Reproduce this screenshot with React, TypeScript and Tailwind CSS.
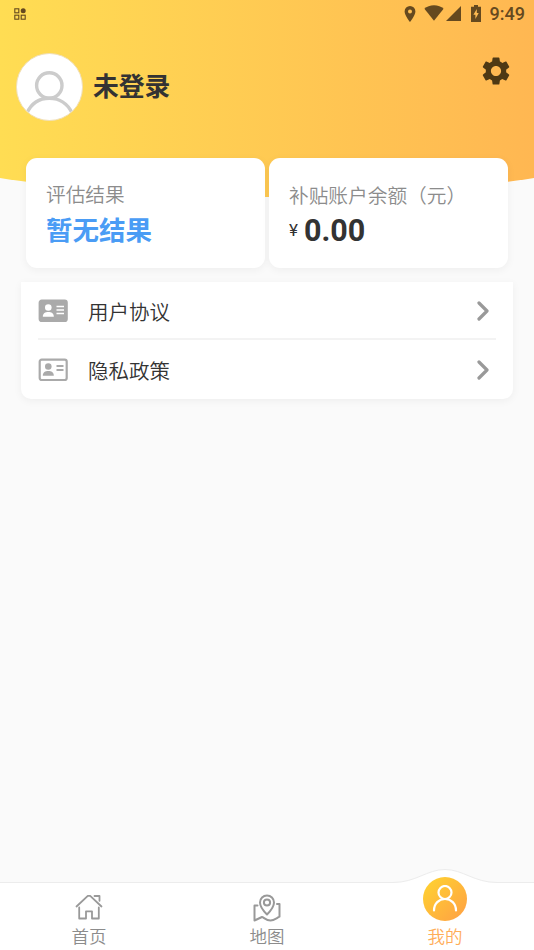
import type { ReactNode } from 'react';

const CJK = "font-['Roboto','Noto_Sans_CJK_SC',sans-serif]";

function StatusBar() {
  return (
    <div className="flex h-[27px] items-center pl-[14px] pr-[9px] text-[#65491f]">
      <svg width="12" height="12" viewBox="0 0 12 12" fill="none" stroke="currentColor" strokeWidth="1.1" aria-hidden="true">
        <rect x="0.8" y="0.8" width="4" height="4" />
        <rect x="0.8" y="7.2" width="4" height="4" />
        <rect x="7.2" y="7.2" width="4" height="4" />
        <circle cx="9.2" cy="2.8" r="2.5" fill="currentColor" stroke="none" />
      </svg>
      <div className="ml-auto flex items-center">
        <svg width="12" height="16" viewBox="0 0 12 16" className="mr-[8px]" fill="currentColor" aria-hidden="true">
          <path fillRule="evenodd" d="M6 0a5.4 5.4 0 0 0-5.4 5.4C.6 9.4 6 16 6 16s5.400-6.600 5.400-10.600A5.400 5.400 0 0 0 6 0zm0 3.400a2 2 0 1 1 0 4 2 2 0 0 1 0-4z" />
        </svg>
        <svg width="20" height="16" viewBox="0 0 20 16" className="-mt-px mr-[2px]" fill="currentColor" aria-hidden="true">
          <path d="M10 .3C6.200.3 2.700 1.600.4 3.800L10 15.800l9.600-12C17.300 1.600 13.800.3 10 .3z" />
        </svg>
        <svg width="15" height="15" viewBox="0 0 15 15" className="mr-[10px]" fill="currentColor" aria-hidden="true">
          <path d="M15 0v15H0z" />
        </svg>
        <svg width="10" height="17" viewBox="0 0 10 17" className="-mt-px mr-[9px]" fill="currentColor" aria-hidden="true">
          <path fillRule="evenodd" d="M3 0h4v1.700h3V17H0V1.700h3zM5.800 4 2.400 9.800h2v4.200l3.300-6H5.800z" />
        </svg>
        <span className="font-['Roboto',sans-serif] text-[18px] font-medium leading-[20px]">9:49</span>
      </div>
    </div>
  );
}

function Avatar() {
  return (
    <div className="h-[68px] w-[67px] shrink-0 overflow-hidden rounded-full border border-[#f0dfb8] bg-white">
      <svg width="65" height="66" viewBox="0 0 65 66" fill="none" stroke="#ccc" strokeWidth="3.400" aria-hidden="true">
        <circle cx="32.300" cy="31.500" r="12.700" />
        <path d="M10 59C14.500 49 23 44.200 32.300 44.200S50.500 49 55 59" />
      </svg>
    </div>
  );
}

function GearIcon() {
  return (
    <svg width="34" height="34" viewBox="0 0 24 24" fill="#4e3914" aria-hidden="true">
      <path d="M19.140 12.940c.04-.3.06-.61.06-.94 0-.32-.02-.64-.07-.94l2.030-1.580c.18-.14.23-.41.12-.61l-1.920-3.320c-.12-.22-.37-.29-.59-.22l-2.390.96c-.5-.38-1.030-.7-1.620-.94l-.36-2.540c-.04-.24-.24-.41-.48-.41h-3.840c-.24 0-.43.17-.47.41l-.36 2.540c-.59.24-1.130.57-1.620.94l-2.390-.96c-.22-.08-.47 0-.59.22L2.740 8.870c-.12.21-.08.47.12.61l2.030 1.580c-.05.3-.09.63-.09.94s.02.64.07.94l-2.030 1.580c-.18.14-.23.41-.12.61l1.920 3.320c.12.22.37.29.59.22l2.390-.96c.5.38 1.030.7 1.620.94l.36 2.540c.05.24.24.41.48.41h3.840c.24 0 .44-.17.47-.41l.36-2.540c.59-.24 1.130-.56 1.620-.94l2.390.96c.22.08.47 0 .59-.22l1.920-3.320c.12-.22.07-.47-.12-.61l-2.010-1.580zM12 15.600c-1.980 0-3.600-1.620-3.600-3.600s1.620-3.600 3.600-3.600 3.600 1.620 3.600 3.600-1.620 3.600-3.600 3.600z" />
    </svg>
  );
}

function IdCardIcon({ filled }: { filled?: boolean }) {
  const ink = filled ? '#fff' : '#aaa';
  return (
    <svg width="30" height="24" viewBox="0 0 30 24" fill="none" aria-hidden="true">
      <rect x="1.700" y="1.700" width="27" height="20.300" rx="2" fill={filled ? '#aaa' : '#fff'} stroke="#aaa" strokeWidth="2.200" />
      <circle cx="10.300" cy="8.500" r="3.300" fill={ink} />
      <path d="M4.800 17.700c0-3.400 2.400-4.800 5.500-4.800s5.500 1.400 5.500 4.800z" fill={ink} />
      {filled ? (
        <path d="M18.500 7.500H26M18.500 11H26M18.500 14.500H26" stroke={ink} strokeWidth="1.500" />
      ) : (
        <path d="M18.500 8h7M18.500 12h7" stroke={ink} strokeWidth="1.900" />
      )}
    </svg>
  );
}

function MenuRow({ icon, label }: { icon: ReactNode; label: string }) {
  return (
    <div className="flex h-[58px] items-center pr-[7px]">
      {icon}
      <span className="ml-[20px] mt-[4px] text-[20.500px] font-[350] leading-[30px] text-[#333]">{label}</span>
      <svg width="12" height="20" viewBox="0 0 12 20" className="ml-auto" fill="none" stroke="#999" strokeWidth="3.200" strokeLinecap="round" strokeLinejoin="round" aria-hidden="true">
        <path d="M2 2l8 8-8 8" />
      </svg>
    </div>
  );
}

function HomeIcon() {
  return (
    <svg width="28" height="26" viewBox="0 0 28 26" fill="none" stroke="#999" strokeWidth="1.800" strokeLinecap="round" strokeLinejoin="round" className="mb-[4px]" aria-hidden="true">
      <path d="M1.500 12.500 12.800 1.800h2.400l11.300 10.700M19.500 2h5v4.800M4.200 13.500v11h6.800v-7.200h6v7.200h6.800v-11" />
    </svg>
  );
}

function MapIcon() {
  return (
    <svg width="28" height="28" viewBox="0 0 28 28" fill="none" stroke="#999" strokeWidth="2" strokeLinejoin="round" strokeLinecap="round" className="mb-[2px]" aria-hidden="true">
      <path d="M14 20.500C10 16.500 7 12.500 7 8.500a7 7 0 0 1 14 0c0 4-3 8-7 12z" />
      <circle cx="14" cy="8.500" r="3.100" />
      <path d="M4.500 11.500H1.500V26.500l7.500-3.500c1.500 0 4 3.500 8.500 3.500 3 0 5.500-2 9-3.800V10h-2.500" />
    </svg>
  );
}

function Tab({ icon, label, active }: { icon: ReactNode; label: string; active?: boolean }) {
  return (
    <div className="flex flex-1 flex-col items-center justify-end">
      {icon}
      <span className={active ? 'text-[17.500px] font-[350] leading-[26px] text-[#ffad58]' : 'text-[17.500px] font-[350] leading-[26px] text-[#8c8c8c]'}>
        {label}
      </span>
    </div>
  );
}

export default function App() {
  return (
    <div className={`relative flex h-[950px] w-[534px] flex-col overflow-hidden bg-[#fafafa] ${CJK}`}>
      {/* curved header backdrop */}
      <div className="absolute inset-x-0 top-0 h-[197px] overflow-hidden">
        <div className="absolute -left-1/2 h-full w-[200%] bg-[linear-gradient(90deg,#ffdd53_25%,#ffb752_75%)] [border-bottom-left-radius:50%_142px] [border-bottom-right-radius:50%_142px]" />
      </div>

      <header className="relative h-[158px]">
        <StatusBar />
        <div className="flex items-start pl-[16px] pr-[21px] pt-[26px]">
          <Avatar />
          <h1 className="ml-[10px] mt-[15px] text-[25.800px] font-bold leading-[38px] text-[#333]">未登录</h1>
          <div className="ml-auto mt-px">
            <GearIcon />
          </div>
        </div>
      </header>

      <section className="relative ml-[26px] mr-[26px] grid h-[110px] grid-cols-2 gap-[4px]">
        <div className="rounded-[11px] bg-white pl-[20px] pt-[23px] shadow-[0_2px_8px_rgba(0,0,0,0.05)]">
          <p className="text-[19.700px] font-[350] leading-[30px] text-[#8c8c8c]">评估结果</p>
          <p className="text-[26.500px] font-bold leading-[40px] text-[#4a9cf5]">暂无结果</p>
        </div>
        <div className="rounded-[11px] bg-white pl-[20px] pt-[24px] shadow-[0_2px_8px_rgba(0,0,0,0.05)]">
          <p className="whitespace-nowrap text-[19.700px] font-[350] leading-[30px] text-[#8c8c8c]">补贴账户余额（元）</p>
          <p className="flex items-center text-[#333]">
            <span className="w-[15px] -mt-[3px] text-[17px] leading-[38px]">¥</span>
            <span className="text-[30.500px] font-bold leading-[38px]">0.00</span>
          </p>
        </div>
      </section>

      <section className="relative ml-[21px] mr-[21px] mt-[14px] h-[117px] rounded-b-[10px] bg-white pl-[17px] pr-[17px] shadow-[0_2px_8px_rgba(0,0,0,0.05)]">
        <MenuRow icon={<IdCardIcon filled />} label="用户协议" />
        <div className="-mt-[2px] mb-px h-[2px] bg-[#f3f3f3]" />
        <MenuRow icon={<IdCardIcon />} label="隐私政策" />
      </section>

      <nav className="relative mt-auto h-[68px] border-t border-[#ececec] bg-white">
        {/* bump behind the active tab */}
        <svg width="104" height="16" viewBox="0 0 104 16" className="absolute -top-[15px] left-[393px]" aria-hidden="true">
          <path d="M0 16V14.500C23 14.500 34 1.500 52 1.500S81 14.500 104 14.500V16z" fill="#fff" />
          <path d="M0 14.500C23 14.500 34 1.500 52 1.500S81 14.500 104 14.500" fill="none" stroke="#ececec" />
        </svg>
        <div className="relative flex h-full">
          <Tab icon={<HomeIcon />} label="首页" />
          <Tab icon={<MapIcon />} label="地图" />
          <Tab
            active
            label="我的"
            icon={
              <div className="mb-[3px] flex h-[44px] w-[44px] shrink-0 items-center justify-center rounded-full bg-[linear-gradient(135deg,#ffd52f,#ff9f45)]">
                <svg width="26" height="28" viewBox="0 0 26 28" fill="none" stroke="#fff" strokeWidth="2.200" strokeLinecap="round" aria-hidden="true">
                  <circle cx="13" cy="7.500" r="6.500" />
                  <path d="M2 25.500C2 18.500 7 14 13 14s11 4.500 11 11.500" />
                </svg>
              </div>
            }
          />
        </div>
      </nav>
    </div>
  );
}
